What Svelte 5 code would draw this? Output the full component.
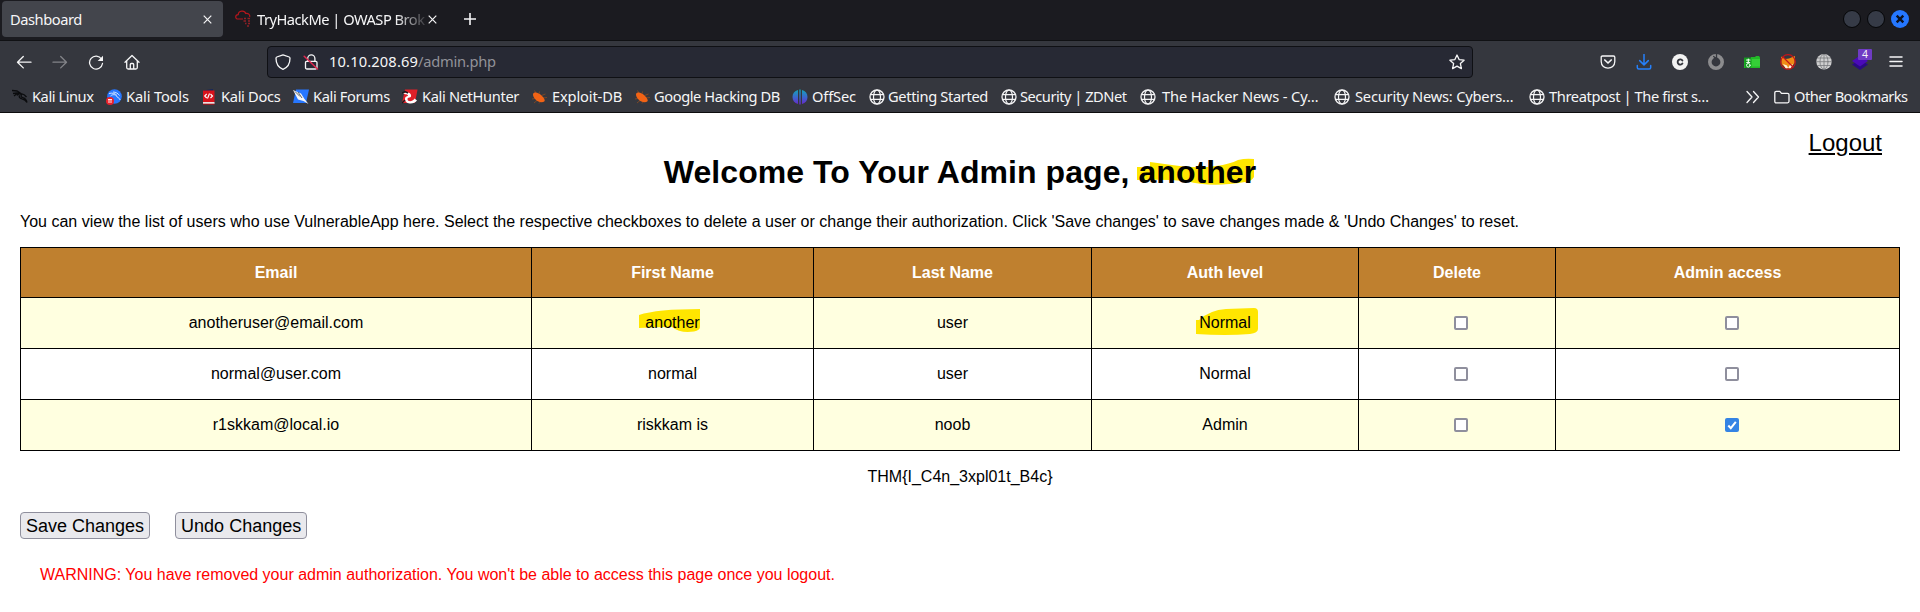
<script>
  // w: slot width, t: gap between icon and label, s: label letter spacing
  const bookmarks = [
    { icon: 'dragon', label: 'Kali Linux', w: 94, t: 4, s: -0.45 },
    { icon: 'tools', label: 'Kali Tools', w: 95, t: 4, s: -0.15 },
    { icon: 'docs', label: 'Kali Docs', w: 92, t: 4, s: -0.33 },
    { icon: 'forums', label: 'Kali Forums', w: 109, t: 4, s: -0.38 },
    { icon: 'nethunter', label: 'Kali NetHunter', w: 129, t: 4, s: -0.35 },
    { icon: 'bug', label: 'Exploit-DB', w: 103, t: 5, s: -0.15 },
    { icon: 'bug', label: 'Google Hacking DB', w: 158, t: 4, s: -0.42 },
    { icon: 'offsec', label: 'OffSec', w: 77, t: 4, s: -0.15 },
    { icon: 'globe', label: 'Getting Started', w: 132, t: 3, s: -0.36 },
    { icon: 'globe', label: 'Security | ZDNet', w: 139, t: 3, s: -0.5 },
    { icon: 'globe', label: 'The Hacker News - Cy…', w: 194, t: 6, s: -0.13 },
    { icon: 'globe', label: 'Security News: Cybers…', w: 195, t: 5, s: -0.2 },
    { icon: 'globe', label: 'Threatpost | The first s…', w: 200, t: 4, s: -0.39 }
  ];
  const headers = ['Email', 'First Name', 'Last Name', 'Auth level', 'Delete', 'Admin access'];
  const users = [
    { email: 'anotheruser@email.com', first: 'another', last: 'user', level: 'Normal', marked: true, admin: false },
    { email: 'normal@user.com', first: 'normal', last: 'user', level: 'Normal', marked: false, admin: false },
    { email: 'r1skkam@local.io', first: 'riskkam is', last: 'noob', level: 'Admin', marked: false, admin: true }
  ];
</script>

{#snippet siteIcon(name)}
  <svg viewBox="0 0 16 16" width="16" height="16" fill="none">
    {#if name === 'dragon'}
      <path d="M0 1.500 5 2l4 2.500M1 4.500l4-.7 4 .9c2.500.5 4 1.300 5.500 3.300M5 6.500c1-2 4-2 4.500-.8-.8 1.300-.5 2.300 1.500 3 2.500.8 3.500 2 4 4.800-1.500-3-3-3.300-5-3.700-2.600-.6-3.200-2-2.500-3.600M2 7l3-2.500" stroke="#0b0c0e" stroke-width="1.300" />
    {:else if name === 'tools'}
      <circle cx="8.500" cy="7.500" r="7.300" fill="#2777ff" />
      <path d="M3 4.500c3-.8 6-.3 8 2M4.500 7c2-2 5.500-1.500 6 0 .2 1.500 3 1.500 3.700 4M7 3c3 0 5 1.500 6.500 3.500" stroke="#cfe2ff" stroke-width="1" />
      <circle cx="4" cy="12" r="4" fill="#e8212b" />
      <path d="M2 10.500h4M3 10.500V14M5 10.500V14" stroke="#fff" stroke-width=".9" />
    {:else if name === 'docs'}
      <path d="M2 1.500 12 0v13H2z" fill="#15265c" />
      <path d="M2 1.500h11.500V13H2z" fill="#d9121b" />
      <path d="M2 13h11.500v2H2z" fill="#e8e2e2" />
      <path d="M2 15.200h11.500" stroke="#b01018" />
      <path d="m5.700 5-2 2 2 2M9.500 5l2 2-2 2M8.500 4.500l-2 5" stroke="#fff" stroke-width="1.100" />
    {:else if name === 'forums'}
      <path d="M3 .5h13L13 14H0z" fill="#2777ff" />
      <path d="m0 1 8 3.500 3.500 5.500 4 5-5-3L5 10.500z" fill="#f7f7f7" />
      <path d="m2 2.500 5 5M5 3l4 6" stroke="#39404b" stroke-width=".8" />
    {:else if name === 'nethunter'}
      <path d="M3 .5h12.500L13 14H0z" fill="#df2029" />
      <path d="M1 5c3-3 9-1.500 8 2.500-.5 1.500-3.500.5-3.500 2.500 0 3 5 3 7-.5l2.500 2c-3 4.500-12 4-12-1.500 0-3 3-2.500 3-3.500S3 5 1 5z" fill="#fff" />
      <path d="m0 4 3-1.500L6 4M0 14l3-3" stroke="#191a1d" stroke-width="1.400" />
    {:else if name === 'bug'}
      <path d="M5 4 3.500 1.500M8 5l.5-2.500M10.500 6.500l4-1.500M12 9l4-.5M4 9.500l-3 .5M6.500 11l-3.500 3M10 12l-2 2.500" stroke="#8a4b22" stroke-width=".8" />
      <path d="M2 5C3.500 2 8 4 10.500 6.500c2 2 4 4.500 3 5.700-2 2-6.500 1-9-1.700C2.500 8.500 2 7 2 5z" fill="#f26315" />
    {:else if name === 'offsec'}
      <defs>
        <linearGradient id="offs" x1="0" y1="0" x2="0" y2="1"><stop stop-color="#12a5b8" /><stop offset=".55" stop-color="#3e62cf" /><stop offset="1" stop-color="#6a26c9" /></linearGradient>
      </defs>
      <path d="M6 1v14C2.500 14 .5 11.500.5 8S2.500 2 6 1zM10 1v14c3.500-1 5.500-3.500 5.500-7S13.500 2 10 1zM7.300.5h1.400v15H7.300z" fill="url(#offs)" />
    {:else}
      <circle cx="8" cy="8" r="7" stroke="#f4f4f5" stroke-width="1.300" />
      <ellipse cx="8" cy="8" rx="3.500" ry="7" stroke="#f4f4f5" stroke-width="1.200" />
      <path d="M1.300 5.700h13.400M1.300 10.300h13.400" stroke="#f4f4f5" stroke-width="1.200" />
    {/if}
  </svg>
{/snippet}

<div class="browser">
  <div class="tabs">
    <div class="tab active">
      <span class="tab-title">Dashboard</span>
      <svg class="x" viewBox="0 0 9 9" width="9" height="9"><path d="m.7.7 7.600 7.600M8.300.7.7 8.300" /></svg>
    </div>
    <div class="tab second">
      <svg class="fav" viewBox="0 0 16 16" width="16" height="16" fill="none">
        <path d="M8 8H3C-.3 8 .2 3.500 3.200 3.600 3.500-.7 9.700-1 10.700 2.500c2.500-.8 4.500 1.300 4 3.500" stroke="#b5161c" stroke-width="1.200" />
        <path d="M9 7.500h2M12.500 7.500H15M8.500 10H11M13 10h2M10 12.500h1.500M13 12.500h2M12 15h2" stroke="#8f2026" stroke-width="1.300" />
      </svg>
      <span class="tab-title fade">TryHackMe | OWASP Brok</span>
      <svg class="x" viewBox="0 0 9 9" width="9" height="9"><path d="m.7.7 7.600 7.600M8.300.7.7 8.300" /></svg>
    </div>
    <svg class="plus" viewBox="0 0 12 12" width="12" height="12"><path d="M6 0v12M0 6h12" /></svg>
    <div class="window-buttons">
      <i></i><i></i>
      <b><svg viewBox="0 0 18 18" width="18" height="18"><path d="m5.700 5.700 6.600 6.600m0-6.600-6.600 6.600" stroke="#0c1220" stroke-width="2.400" /></svg></b>
    </div>
  </div>

  <div class="toolbar">
    <svg class="ic nav" viewBox="0 0 16 16" width="16" height="16"><path d="M15 8.200H1.800M7.300 2.500 1.500 8.200l5.800 5.700" /></svg>
    <svg class="ic nav dim" viewBox="0 0 16 16" width="16" height="16"><path d="M1 8.200h13.200M8.700 2.500l5.800 5.700-5.800 5.700" /></svg>
    <svg class="ic nav" viewBox="0 0 16 16" width="16" height="16"><path d="M13.500 5A6.500 6.500 0 1 0 14.500 9.500" /><path d="M15 1.700v5.300H9.700z" fill="#f6f6f7" stroke="none" /></svg>
    <svg class="ic nav" viewBox="0 0 16 16" width="16" height="16"><path d="M1 8.300 8 1.500l7 6.800M2.700 7v6.500q0 1.500 1.500 1.500h7.600q1.500 0 1.500-1.500V7M6.300 15v-4.500q0-1 1-1h1.400q1 0 1 1V15" /></svg>
    <div class="url">
      <svg class="ic" viewBox="0 0 16 16" width="16" height="16"><path d="M8 .9 14.200 3q.8.3.8 1.200C15 9.500 12.500 13.500 8 15.300 3.500 13.500 1 9.500 1 4.200Q1 3.300 1.800 3z" /></svg>
      <svg class="ic lock" viewBox="0 0 16 16" width="16" height="16">
        <path d="M4.700 7V4.500a3.600 3.600 0 0 1 7.200 0V7M3.500 7.300h9.300q1.200 0 1.200 1.200v5q0 1.500-1.500 1.500h-8.500q-1.500 0-1.500-1.500v-5q0-1.200 1-1.200z" />
        <path d="m1.200 2.200 13.300 12.800" stroke="#e22850" stroke-width="1.500" />
      </svg>
      <span class="address">10.10.208.69<em>/admin.php</em></span>
      <svg class="ic star" viewBox="0 0 16 16" width="16" height="16"><path d="m8 1 2.100 4.600 5 .6-3.700 3.400 1 5L8 12.100l-4.400 2.500 1-5L.9 6.200l5-.6z" /></svg>
    </div>
    <div class="addons">
      <svg class="ic" viewBox="0 0 16 16" width="16" height="16"><path d="M2.500 2h11q1.300 0 1.300 1.300V7.500C14.800 16.300 1.200 16.300 1.200 7.500V3.300Q1.200 2 2.500 2z" /><path d="m4.800 6 3.200 3 3.200-3" stroke-width="1.700" /></svg>
      <svg class="ic" viewBox="0 0 16 16" width="16" height="16"><g stroke="#2580fb" stroke-width="1.500"><path d="M8 .5v10.300M3.700 6.600 8 10.900l4.300-4.300M1.300 11.500v2q0 1.500 1.500 1.500h10.400q1.500 0 1.500-1.500v-2" /></g></svg>
      <svg class="ic" viewBox="0 0 16 16" width="16" height="16"><circle cx="8" cy="8" r="8" fill="#f2f2f2" stroke="none" /><path d="M10.400 6.500a2.600 2.600 0 1 0 0 3" stroke="#33353c" stroke-width="1.900" /></svg>
      <svg class="ic" viewBox="0 0 16 16" width="16" height="16"><circle cx="8" cy="8" r="6.200" stroke="#8c8c8e" stroke-width="3.600" /><path d="M8.500 0v5L5.700 2.500" stroke="#35373e" stroke-width="1.300" /></svg>
      <svg class="ic" viewBox="0 0 16 16" width="16" height="16"><path d="M0 4.500h7V3h4l1-1h3l1 1.500V14H0z" fill="#22b827" stroke="none" /><path d="M8 5h8v7.500H8z" fill="#35cf37" stroke="none" /><path d="M0 3.500h7v10.200H1z" fill="#159a20" stroke="none" /><path d="M2.500 6h3.500M4.300 5v3.500M2.700 8.500h3" stroke="#eaffea" stroke-width="1.200" /><circle cx="4.300" cy="11.300" r="1.800" stroke="#eaffea" stroke-width="1" /></svg>
      <svg class="ic" viewBox="0 0 16 16" width="16" height="16"><path d="M1 2.500 5.500 5 9 4.500l6-2.500-.5 7-4 5.500H6L1.500 10z" fill="#f08c16" stroke="none" /><path d="m3 10 4 1.500 1 2.500-2 .8zM13 10l-3.500 1.500-1.300 2.500 2.300.8z" fill="#fff0dc" stroke="none" /><circle cx="8" cy="8" r="7.300" stroke="#c4141a" stroke-width="1.200" /><path d="m3 3 10 10" stroke="#c4141a" stroke-width="1.200" /></svg>
      <svg class="ic" viewBox="0 0 16 16" width="16" height="16"><circle cx="8" cy="7.700" r="7.700" fill="#cfcfd0" stroke="none" /><g stroke="#77787c" stroke-width=".8"><ellipse cx="8" cy="7.700" rx="4" ry="7.500" /><path d="M8 0v15.500M.3 7.700h15.400M1.500 4h13M1.500 11.500h13" /></g></svg>
      <span class="layers">
        <svg class="ic" viewBox="0 0 16 16" width="16" height="16"><path d="m0 10.500 3-2 5 3.500 5-3.500 3 2-8 5.500z" fill="#2a0a83" stroke="none" /><path d="m8 1.500 8 5.500-8 5.500L0 7z" fill="#4a0ab8" stroke="none" /></svg>
        <span class="count">4</span>
      </span>
      <svg class="ic menu" viewBox="0 0 16 16" width="16" height="16"><path d="M2 3h12M2 7.500h12M2 12h12" /></svg>
    </div>
  </div>

  <div class="bookmarks">
    {#each bookmarks as b}
      <div class="bookmark" style="width:{b.w}px;gap:{b.t}px;letter-spacing:{b.s}px">{@render siteIcon(b.icon)}<span>{b.label}</span></div>
    {/each}
    <svg class="ic more" viewBox="0 0 16 16" width="16" height="16"><path d="m2 2.500 5 5.500-5 5.500M8.500 2.500l5 5.500-5 5.500" /></svg>
    <div class="bookmark other">
      <svg class="ic" viewBox="0 0 16 16" width="16" height="16"><path d="M2.300 2.300h3.500l1.700 2h6q1.500 0 1.500 1.500v6.500q0 1.500-1.500 1.500H2.300Q.8 13.800.8 12.300V3.800q0-1.500 1.500-1.500z" /></svg>
      <span>Other Bookmarks</span>
    </div>
  </div>
</div>

<main>
  <a class="logout" href="#logout">Logout</a>
  <h1>Welcome To Your Admin page, <span class="mark">
    <svg class="ink title-ink" viewBox="0 0 120 28" width="120" height="28"><path d="M1 9h13V4l22 3q24 4 44 1 14-2 22-6 8-2 16-1v18q-3 5-9 5-35 6-58-1-26-2-50-1z" /></svg><span class="over">another</span></span></h1>
  <p class="intro">You can view the list of users who use VulnerableApp here. Select the respective checkboxes to delete a user or change their authorization. Click 'Save changes' to save changes made &amp; 'Undo Changes' to reset.</p>
  <table>
    <colgroup><col class="c1" /><col class="c2" /><col class="c3" /><col class="c4" /><col class="c5" /><col class="c6" /></colgroup>
    <thead>
      <tr>{#each headers as h}<th>{h}</th>{/each}</tr>
    </thead>
    <tbody>
      {#each users as u}
        <tr>
          <td>{u.email}</td>
          <td>
            {#if u.marked}
              <span class="mark"><svg class="ink first-ink" viewBox="0 0 61 23" width="61" height="23"><path d="M0 6Q18 0 61 0v18q0 3-6 4.500-14 2-22-4.500-16 0-33 1z" /></svg><span class="over">{u.first}</span></span>
            {:else}{u.first}{/if}
          </td>
          <td>{u.last}</td>
          <td>
            {#if u.marked}
              <span class="mark"><svg class="ink level-ink" viewBox="0 0 62 27" width="62" height="27"><path d="M0 12h3Q14 2 30 1l28-1q4 0 4 4v17q0 4-8 5-24 2-54 0z" /></svg><span class="over">{u.level}</span></span>
            {:else}{u.level}{/if}
          </td>
          <td><span class="box"></span></td>
          <td>
            <span class="box" class:on={u.admin}>
              {#if u.admin}<svg viewBox="0 0 14 14" width="14" height="14"><path d="m3.300 7.500 2.500 2.700 5-6.400" fill="none" stroke="#fff" stroke-width="2" /></svg>{/if}
            </span>
          </td>
        </tr>
      {/each}
    </tbody>
  </table>
  <p class="flag">THM{'{'}I_C4n_3xpl01t_B4c{'}'}</p>
  <div class="actions">
    <button type="button">Save Changes</button>
    <button type="button">Undo Changes</button>
  </div>
  <p class="warning">WARNING: You have removed your admin authorization. You won't be able to access this page once you logout.</p>
</main>

<style>
  :global(body) { margin: 0; background: #fff; overflow: hidden; }
  .browser { height: 113px; box-sizing: border-box; border-bottom: 1px solid #0c0c0d; background: #35373e; color: #f6f6f7; font: 14.67px/20px "Noto Sans", sans-serif; white-space: nowrap; }
  svg { display: block; flex: none; }
  .ic { fill: none; stroke: #f6f6f7; stroke-width: 1.300; stroke-linecap: round; stroke-linejoin: round; }
  .tabs { display: flex; align-items: flex-start; height: 41px; box-sizing: border-box; border-bottom: 1px solid #101114; background: #1b1b20; }
  .tab { display: flex; align-items: center; height: 36px; margin-top: 1px; box-sizing: border-box; letter-spacing: -.45px; }
  .active { width: 221px; margin-left: 2px; padding: 0 11px 0 8px; justify-content: space-between; border-radius: 4px; background: #43454c; }
  .second { margin-left: 12px; }
  .second .fav { margin-right: 6px; overflow: visible; }
  .fade { width: 168px; margin-right: 3px; letter-spacing: -.5px; -webkit-mask-image: linear-gradient(90deg, #000 82%, rgba(0, 0, 0, .15)); mask-image: linear-gradient(90deg, #000 82%, rgba(0, 0, 0, .15)); }
  .x path, .plus path { stroke: #f6f6f7; stroke-width: 1.200; fill: none; }
  .plus path { stroke-width: 1.600; }
  .plus { margin: 13px 0 0 27px; }
  .window-buttons { display: flex; align-items: center; gap: 6px; margin: 10px 11px 0 auto; height: 18px; }
  .window-buttons i { width: 18px; height: 18px; box-sizing: border-box; border: 1px solid #050608; border-radius: 50%; background: #363b47; }
  .window-buttons b { width: 18px; height: 18px; border-radius: 50%; background: #2577ff; }
  .toolbar { display: flex; align-items: center; height: 41px; padding-left: 16px; }
  .nav { margin-right: 20px; }
  .dim { opacity: .4; }
  .url { display: flex; align-items: center; width: 1206px; height: 32px; box-sizing: border-box; margin-left: 107px; padding: 0 7px; border: 1px solid #0f1014; border-radius: 4px; background: #272934; }
  .lock { margin-left: 12px; }
  .address { margin: -2px 0 0 10px; letter-spacing: .15px; }
  .address em { font-style: normal; letter-spacing: -.25px; color: #929299; }
  .star { margin-left: auto; }
  .addons { display: flex; gap: 20px; margin-left: 127px; }
  .layers { position: relative; }
  .count { position: absolute; left: 6px; top: -5px; width: 14px; height: 11px; border-radius: 1px; background: #6f3cc4; font-size: 10.500px; line-height: 11px; text-align: center; }
  .menu { stroke-width: 1.500; }
  .bookmarks { display: flex; align-items: center; height: 30px; padding-left: 12px; }
  .bookmark { display: flex; align-items: center; flex: none; }
  .bookmark span { margin-top: -2px; }
  .more { margin-left: 16px; }
  .other { gap: 4px; margin-left: 13px; letter-spacing: -.55px; }

  main { display: flex; flex-direction: column; position: relative; padding: 0 20px; font: 16px/18px "Liberation Sans", Arial, sans-serif; color: #000; }
  .logout { position: absolute; right: 38px; top: 16px; font-size: 24px; line-height: 28px; color: #000; }
  h1 { margin: 41px 0 0; font-size: 32px; line-height: 36px; letter-spacing: .06px; text-align: center; white-space: nowrap; }
  .intro { margin: 23px 0 0; }
  table { width: 1880px; margin-top: 16px; table-layout: fixed; border-spacing: 1px; border-collapse: separate; background: #000; }
  .c1 { width: 510px; } .c2 { width: 281px; } .c3 { width: 277px; } .c4 { width: 266px; } .c5 { width: 196px; } .c6 { width: 343px; }
  th, td { height: 50px; padding: 0; text-align: center; vertical-align: middle; background: #ffffe0; }
  th { height: 49px; color: #fff; background: #bf802f; }
  tr:nth-child(even) td { background: #fff; }
  .mark { position: relative; display: inline-block; }
  .over { position: relative; }
  .ink { position: absolute; fill: #ffe600; }
  .title-ink { left: -2px; top: 4px; }
  .first-ink { left: -6px; top: -5px; }
  .level-ink { left: -3px; top: -6px; }
  .box { display: block; width: 14px; height: 14px; box-sizing: border-box; margin: 0 auto; position: relative; left: 4px; border: 2px solid #8f8f9d; border-radius: 2px; background: #fff; }
  .on { border: 0; background: #3584e4; }
  .flag { margin: 17px 0 0; text-align: center; }
  .actions { display: flex; gap: 25px; margin-top: 26px; }
  button { height: 27px; padding: 0 5px; border: 1px solid #8f8f9d; border-radius: 4px; background: #e9e9ed; color: #000; font: 18px/20px "Liberation Sans", Arial, sans-serif; }
  .warning { margin: 27px 0 0 20px; color: #f00; }
</style>
